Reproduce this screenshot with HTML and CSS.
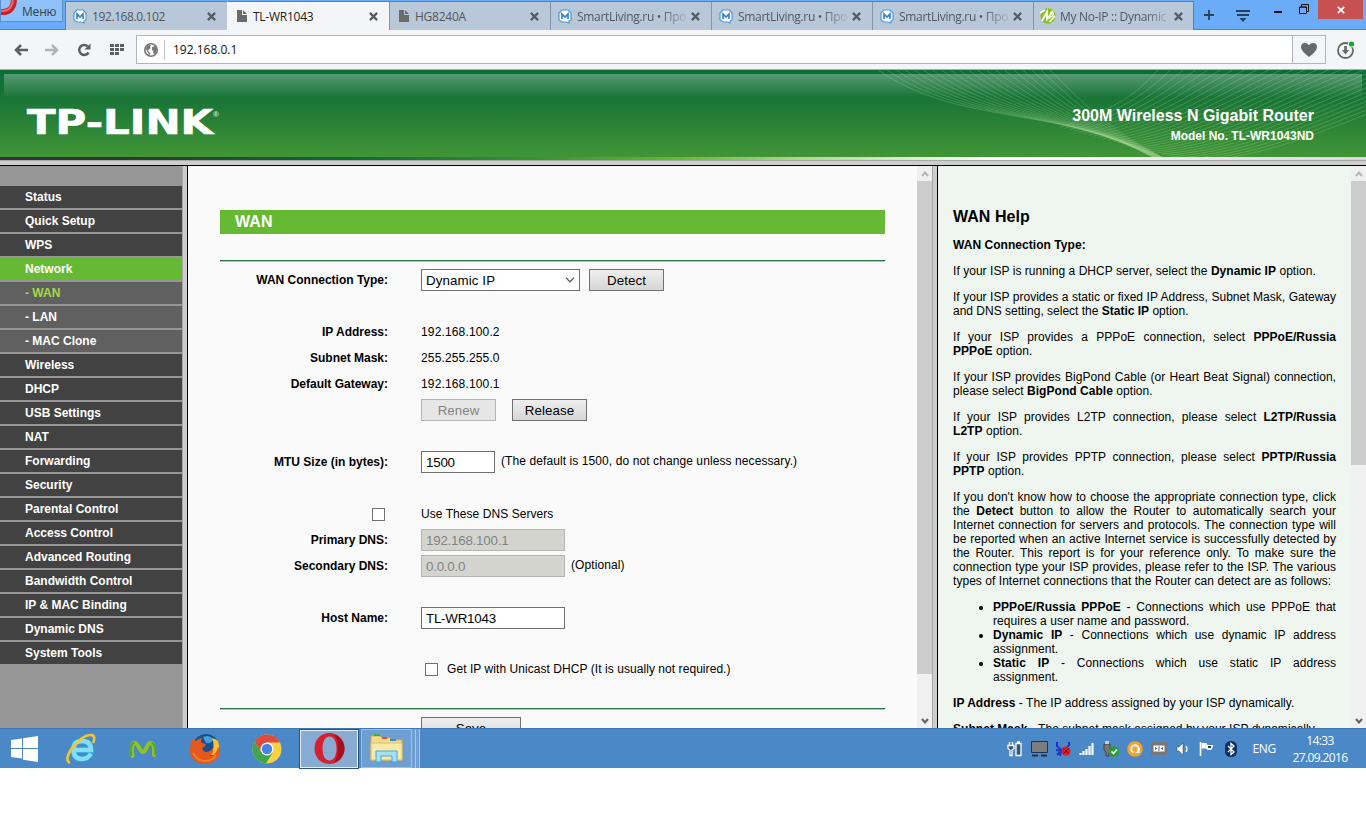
FILE: index.html
```
<!DOCTYPE html>
<html lang="en">
<head>
    <meta charset="UTF-8">
    <meta name="viewport" content="width=device-width, initial-scale=1.0">
    <title>TL-WR1043</title>
    <link rel="stylesheet" href="styles.css">
</head>
<body>
    <!-- shared icons -->
    <svg width="0" height="0" class="defs">
        <symbol id="fav-m" viewBox="0 0 14 15">
            <path d="M4 1h6l3 3v7l-2 1v2l-3-1H4l-3-2V4z" fill="#fff" stroke="#4f97d8" stroke-width="1.2"/>
            <path d="M4 10V5l3 3 3-3v5" fill="none" stroke="#3583cf" stroke-width="1.7"/>
        </symbol>
        <symbol id="fav-doc" viewBox="0 0 10 12">
            <path d="M0 0h5v5h5v7H0z" fill="#6b6b6b"/>
            <path d="M6 0l4 4H6z" fill="#6b6b6b"/>
        </symbol>
        <symbol id="x" viewBox="0 0 8 8">
            <path d="M.8.8l6.4 6.4M7.2.8L.8 7.2" stroke="#555c63" stroke-width="2"/>
        </symbol>
        <symbol id="chev" viewBox="0 0 8 6">
            <path d="M1 1l3 3.4L7 1" fill="none" stroke="currentColor" stroke-width="2"/>
        </symbol>
    </svg>

    <div class="tabstrip">
        <div class="menu-btn">
            <svg class="o-logo" width="18" height="17" viewBox="0 0 18 17"><path d="M0 12Q12 13 13 0" fill="none" stroke="#c8202c" stroke-width="6"/><path d="M0 11Q11 11.500 12 0" fill="none" stroke="#f26a70" stroke-width="2"/></svg>
            <span>Меню</span>
        </div>
        <div class="tab first"><svg class="fav" width="14" height="15"><use href="#fav-m"/></svg><span class="tt">192.168.0.102</span><svg class="cl" width="9" height="9"><use href="#x"/></svg></div>
        <div class="tab active"><svg class="fav doc" width="10" height="12"><use href="#fav-doc"/></svg><span class="tt">TL-WR1043</span><svg class="cl" width="9" height="9"><use href="#x"/></svg></div>
        <div class="tab"><svg class="fav doc" width="10" height="12"><use href="#fav-doc"/></svg><span class="tt">HG8240A</span><svg class="cl" width="9" height="9"><use href="#x"/></svg></div>
        <div class="tab"><svg class="fav" width="14" height="15"><use href="#fav-m"/></svg><span class="tt fade">SmartLiving.ru • Про</span><svg class="cl" width="9" height="9"><use href="#x"/></svg></div>
        <div class="tab"><svg class="fav" width="14" height="15"><use href="#fav-m"/></svg><span class="tt fade">SmartLiving.ru • Про</span><svg class="cl" width="9" height="9"><use href="#x"/></svg></div>
        <div class="tab"><svg class="fav" width="14" height="15"><use href="#fav-m"/></svg><span class="tt fade">SmartLiving.ru • Про</span><svg class="cl" width="9" height="9"><use href="#x"/></svg></div>
        <div class="tab last"><svg class="fav noip" width="16" height="16" viewBox="0 0 16 16"><circle cx="8" cy="8" r="7.700" fill="#8cc220"/><path d="M0 5l5-3M2 13L7 4v7l6-8M9.500 14L15 8" stroke="#fff" stroke-width="1.800" fill="none"/><path d="M10 4.500h2.500q2 2-1 4l-3 2" stroke="#fff" stroke-width="1.500" fill="none"/></svg><span class="tt fade">My No-IP :: Dynamic</span><svg class="cl" width="9" height="9"><use href="#x"/></svg></div>
        <svg class="plus" width="10" height="10" viewBox="0 0 10 10"><path d="M5 0v10M0 5h10" stroke="#27405c" stroke-width="1.800"/></svg>
        <svg class="tabmenu" width="14" height="12" viewBox="0 0 14 12"><path d="M0 1h14M1 5h12" stroke="#27405c" stroke-width="1.800"/><path d="M3.500 8h7L7 12z" fill="#27405c"/></svg>
        <div class="win">
            <svg class="min" width="8" height="2"><rect width="8" height="2" fill="#111"/></svg>
            <svg class="max" width="10" height="10" viewBox="0 0 10 10"><path d="M.5 3h7v6.500h-7zM2.500 2.500V.5h7v7H8" fill="none" stroke="#111"/><path d="M.5 3h7" stroke="#111"/></svg>
            <div class="close"><svg width="8" height="8" viewBox="0 0 8 8"><path d="M.8.8l6.400 6.400M7.200.8L.8 7.200" stroke="#fff" stroke-width="1.700"/></svg></div>
        </div>
    </div>

    <div class="toolbar">
        <svg class="t-back" width="14" height="12" viewBox="0 0 14 12"><path d="M14 6H3M7 1L2 6l5 5" fill="none" stroke="#5e5e5e" stroke-width="2.500"/></svg>
        <svg class="t-fwd" width="14" height="12" viewBox="0 0 14 12"><path d="M0 6h11M7 1l5 5-5 5" fill="none" stroke="#b3b3b3" stroke-width="2.500"/></svg>
        <svg class="t-rel" width="14" height="14" viewBox="0 0 14 14"><path d="M11.500 9.500A5 5 0 1 1 10.800 3.400" fill="none" stroke="#5e5e5e" stroke-width="2.500"/><path d="M13.500.5v6h-6z" fill="#5e5e5e"/></svg>
        <svg class="t-grid" width="14" height="11" viewBox="0 0 14 11"><path d="M0 1.500h14M0 5.500h14M0 9.500h9" stroke="#5e5e5e" stroke-width="3" stroke-dasharray="4 1"/></svg>
        <div class="address">
            <svg class="globe" width="14" height="14" viewBox="0 0 14 14"><circle cx="7" cy="7" r="6.200" fill="#fff" stroke="#777" stroke-width="1.600"/><path d="M3 2.500l4-.5-1 2 1 1-2 1-1 2 2 2v3L4 10 2 6zM8 4l3-1 2 4-2 4-2-1 .5-2L8 7z" fill="#777"/></svg>
            <span class="url">192.168.0.1</span>
            <div class="heart"><svg width="16" height="14" viewBox="0 0 16 14"><path d="M8 14Q0 8 0 4.300 0 0 4 0 6.500 0 8 2.300 9.500 0 12 0q4 0 4 4.300Q16 8 8 14z" fill="#686868"/></svg></div>
        </div>
        <svg class="t-dl" width="18" height="18" viewBox="0 0 18 18"><circle cx="8.500" cy="9.500" r="7.500" fill="none" stroke="#666" stroke-width="1.800"/><path d="M8.500 5v5" stroke="#666" stroke-width="2.600"/><path d="M5 9h7l-3.500 4.500z" fill="#666"/><circle cx="14.500" cy="3" r="3.500" fill="#f4f5f7"/><circle cx="14.500" cy="3" r="2.600" fill="#12a825"/></svg>
    </div>

    <header>
        <svg id="waves" width="496" height="87" viewBox="0 0 496 87"></svg>
        <div class="gloss"></div>
        <svg class="brand" width="200" height="34" viewBox="0 0 200 34">
            <text x="1" y="29" textLength="186" lengthAdjust="spacingAndGlyphs" class="brand-name">TP-LINK</text>
            <text x="187" y="12" class="brand-r">®</text>
        </svg>
        <div class="model">
            <div class="model-name">300M Wireless N Gigabit Router</div>
            <div class="model-no">Model No. TL-WR1043ND</div>
        </div>
    </header>
    <div class="stripe"></div>

    <div class="frames">
        <nav class="sidebar">
            <ul>
                <li><a>Status</a></li>
                <li><a>Quick Setup</a></li>
                <li><a>WPS</a></li>
                <li class="open"><a>Network</a></li>
                <li class="sub cur"><a>- WAN</a></li>
                <li class="sub"><a>- LAN</a></li>
                <li class="sub"><a>- MAC Clone</a></li>
                <li><a>Wireless</a></li>
                <li><a>DHCP</a></li>
                <li><a>USB Settings</a></li>
                <li><a>NAT</a></li>
                <li><a>Forwarding</a></li>
                <li><a>Security</a></li>
                <li><a>Parental Control</a></li>
                <li><a>Access Control</a></li>
                <li><a>Advanced Routing</a></li>
                <li><a>Bandwidth Control</a></li>
                <li><a>IP &amp; MAC Binding</a></li>
                <li><a>Dynamic DNS</a></li>
                <li><a>System Tools</a></li>
            </ul>
        </nav>
        <div class="splitter"></div>

        <main>
            <h1>WAN</h1>
            <div class="rule"></div>
            <div class="form">
                <div class="row">
                    <label>WAN Connection Type:</label>
                    <div class="select">Dynamic IP<svg width="10" height="6" viewBox="0 0 10 6"><path d="M1 .8l4 4 4-4" fill="none" stroke="#666" stroke-width="1.400"/></svg></div>
                    <button class="detect">Detect</button>
                </div>
                <div class="row gap"><label>IP Address:</label><span class="ip">192.168.100.2</span></div>
                <div class="row"><label>Subnet Mask:</label><span class="ip">255.255.255.0</span></div>
                <div class="row"><label>Default Gateway:</label><span class="ip">192.168.100.1</span></div>
                <div class="row"><label></label><button disabled>Renew</button><button class="release">Release</button></div>
                <div class="row gap"><label>MTU Size (in bytes):</label><input type="text" class="short" value="1500"><span class="note">(The default is 1500, do not change unless necessary.)</span></div>
                <div class="row gap"><label><i class="check"></i></label><span>Use These DNS Servers</span></div>
                <div class="row"><label>Primary DNS:</label><input type="text" value="192.168.100.1" disabled></div>
                <div class="row"><label>Secondary DNS:</label><input type="text" value="0.0.0.0" disabled><span class="note">(Optional)</span></div>
                <div class="row gap"><label>Host Name:</label><input type="text" value="TL-WR1043"></div>
                <div class="row gap ucast"><label></label><i class="check"></i><span>Get IP with Unicast DHCP (It is usually not required.)</span></div>
            </div>
            <div class="rule bottom"></div>
            <button class="save">Save</button>
        </main>
        <div class="scroll main-scroll">
            <svg class="up" width="8" height="6"><use href="#chev"/></svg>
            <div class="thumb"></div>
            <svg class="down" width="8" height="6"><use href="#chev"/></svg>
        </div>
        <div class="splitter"></div>

        <aside>
            <h2>WAN Help</h2>
            <p><b>WAN Connection Type:</b></p>
            <p>If your ISP is running a DHCP server, select the <b>Dynamic IP</b> option.</p>
            <p class="tight">If your ISP provides a static or fixed IP Address, Subnet Mask, Gateway and DNS setting, select the <b>Static IP</b> option.</p>
            <p>If your ISP provides a PPPoE connection, select <b>PPPoE/Russia PPPoE</b> option.</p>
            <p>If your ISP provides BigPond Cable (or Heart Beat Signal) connection, please select <b>BigPond Cable</b> option.</p>
            <p>If your ISP provides L2TP connection, please select <b>L2TP/Russia L2TP</b> option.</p>
            <p>If your ISP provides PPTP connection, please select <b>PPTP/Russia PPTP</b> option.</p>
            <p>If you don't know how to choose the appropriate connection type, click the <b>Detect</b> button to allow the Router to automatically search your Internet connection for servers and protocols. The connection type will be reported when an active Internet service is successfully detected by the Router. This report is for your reference only. To make sure the connection type your ISP provides, please refer to the ISP. The various types of Internet connections that the Router can detect are as follows:</p>
            <ul>
                <li><b>PPPoE/Russia PPPoE</b> - Connections which use PPPoE that requires a user name and password.</li>
                <li><b>Dynamic IP</b> - Connections which use dynamic IP address assignment.</li>
                <li><b>Static IP</b> - Connections which use static IP address assignment.</li>
            </ul>
            <p><b>IP Address</b> - The IP address assigned by your ISP dynamically.</p>
            <p><b>Subnet Mask</b> - The subnet mask assigned by your ISP dynamically.</p>
        </aside>
        <div class="scroll help-scroll">
            <svg class="up" width="8" height="6"><use href="#chev"/></svg>
            <div class="thumb"></div>
            <svg class="down" width="8" height="6"><use href="#chev"/></svg>
        </div>
    </div>

    <div class="taskbar">
        <div class="app start"><svg width="27" height="26" viewBox="0 0 27 26"><path d="M0 4l11-1.500V12H0zM12 2.300L27 0v12H12zM0 13h11v9.500L0 21zM12 13h15v13l-15-2.300z" fill="#fff"/></svg></div>
        <div class="app"><svg width="32" height="32" viewBox="0 0 32 32"><path d="M26 20.500Q23 26 17 26 8.500 26 8.500 16.500 8.500 8 17 8 26 8 26 17H10" fill="none" stroke="#2b9fd6" stroke-width="6.500"/><path d="M26 20.500Q23 26 17 26 8.500 26 8.500 16.500 8.500 8 17 8 26 8 26 17H10" fill="none" stroke="#86ddf8" stroke-width="4.500"/><path d="M5 30Q-1 27 7 15 18 1 27 2q4 2 1 8" fill="none" stroke="#f5c52c" stroke-width="2.600"/></svg></div>
        <div class="app"><svg width="28" height="22" viewBox="0 0 28 22"><path d="M3.500 18C2 10 3 5 6 5s5 9 8 9 4-9 7.500-9 4 5 3.500 12" fill="none" stroke="#8fc31f" stroke-width="4.200" stroke-linecap="round"/><path d="M2.300 18C1.200 11 2 6 5 4.500M26 17c1-6-.5-11-3.500-12.500" fill="none" stroke="#4ba23a" stroke-width="1.800"/></svg></div>
        <div class="app"><svg width="32" height="32" viewBox="0 0 32 32"><circle cx="17" cy="14" r="13" fill="#16508f"/><path d="M14 4q6-3 10 2-1 5-7 4z" fill="#3fa1d8"/><path d="M29 8Q32 16 27 22L21 22Q27 15 23 5 27 6 29 8z" fill="#f9c22e"/><path d="M4 6q2 1 3 2 3-3 6-3-2 3 0 5l4 1q-1 3-4 4 1 4 5 4 4-1 6-4 1 6-4 8 7 0 9-9 4 4 0 10-5 7-13 7Q1 30 1 17 1 10 4 6z" fill="#e5581c"/><path d="M4 20q4 8 12 8 8 0 11-6" fill="none" stroke="#f27d21" stroke-width="2"/></svg></div>
        <div class="app"><svg width="30" height="30" viewBox="0 0 30 30"><circle cx="15" cy="15" r="14.500" fill="#fbd144"/><path d="M2.500 7.500A14.500 14.500 0 0 1 28 8.500H15L8.500 17z" fill="#dd4b3e"/><path d="M2.500 7.500A14.500 14.500 0 0 0 14 29.500L20.500 19 9 18z" fill="#3fa650"/><circle cx="15" cy="15" r="6.500" fill="#fff"/><circle cx="15" cy="15" r="5.200" fill="#4484ee"/></svg></div>
        <div class="app run"><svg width="31" height="31" viewBox="0 0 31 31"><path d="M15.500 0C7 0 .5 6.500.5 15.500S7 31 15.500 31s15-6.500 15-15.500S24 0 15.500 0zm0 3.500c4.500 0 7 5 7 12s-2.500 12-7 12-7-5-7-12 2.500-12 7-12z" fill="#d5202f" fill-rule="evenodd"/><path d="M20 1.500c14 5 14 23 0 28q4-5 4-14t-4-14z" fill="#a70e20"/></svg></div>
        <div class="app exp"><svg width="34" height="31" viewBox="0 0 34 31"><path d="M1 3h9l2 2h8l2 2h10v20H1z" fill="#f3dd8b" stroke="#cfae4e"/><path d="M4 1h6v2H4z" fill="#35b24a"/><path d="M12 4h5v2h-5z" fill="#e0533d"/><path d="M20 6h6v2h-6z" fill="#2f8fdd"/><path d="M1 10h31v17H1z" fill="#f9e9a8" stroke="#dcbf68"/><path d="M6 29V18h21v11h-5v-6H11v6z" fill="#a7e0f2" stroke="#4aa6d2"/></svg></div>
        <div class="stack"><i></i><i></i></div>

        <div class="tray">
            <div><svg width="16" height="16" viewBox="0 0 16 16"><path d="M9 2.500h5v12H9zM10 1h3M2.500 1v3M5.500 1v3M1 4.500h6v3L5 9v5.500H3V9L1 7.500z" fill="#33567d" stroke="#fff" stroke-width="1.300"/></svg></div>
            <div><svg width="17" height="16" viewBox="0 0 17 16"><path d="M.5.5h16v11H.5z" fill="#7d7d7d" stroke="#24304f"/><path d="M1 14.500h6M10 14.500h6" stroke="#24304f" stroke-width="2"/></svg></div>
            <div><svg width="17" height="16" viewBox="0 0 17 16"><path d="M2 1v4l4 4 5-1 3-4V1M1 9l5 1-4 4M6 10l-1 5" fill="none" stroke="#1b36c7" stroke-width="2"/><circle cx="11" cy="10" r="4.500" fill="#dd1c26"/><path d="M8.500 7.500l5 5m0-5l-5 5" stroke="#601"/></svg></div>
            <div><svg width="16" height="14" viewBox="0 0 16 14"><path d="M1.500 11v2M4.500 9v4M7.500 7v6M10.500 4v9M13.500 1v12" stroke="#fff" stroke-width="2.200"/></svg></div>
            <div><svg width="17" height="16" viewBox="0 0 17 16"><path d="M1 3h6v7l-1 2v3H3v-4L1 9z" fill="#777" stroke="#444"/><path d="M2 0h4v3H2z" fill="#ccc"/><circle cx="11" cy="10.500" r="5.300" fill="#2c9a35"/><path d="M8.500 10.500l2 2 3.500-4" fill="none" stroke="#fff" stroke-width="1.700"/></svg></div>
            <div><svg width="16" height="16" viewBox="0 0 16 16"><circle cx="8" cy="8" r="7.800" fill="#f7a12b"/><circle cx="8" cy="8" r="3.800" fill="none" stroke="#fff" stroke-width="1.900"/><path d="M11.500 8v4" stroke="#fff" stroke-width="1.900"/><path d="M6 12l2-1.500L10 13H6z" fill="#f7a12b"/></svg></div>
            <div><svg width="16" height="14" viewBox="0 0 16 14"><rect width="16" height="13" rx="1" fill="#777"/><path d="M2.500 3.500h11v6h-11z" fill="#fff"/><path d="M4 5l2.500 1.500L4 8zM12 5L9.500 6.500 12 8zM7.500 4h1v5h-1z" fill="#666"/></svg></div>
            <div><svg width="14" height="14" viewBox="0 0 14 14"><path d="M1 5h2l4-4v12L3 9H1z" fill="#fff" stroke="#24405f" stroke-width=".5"/><path d="M10 4q2 3 0 6" fill="none" stroke="#fff" stroke-width="1.300"/></svg></div>
            <div><svg width="16" height="16" viewBox="0 0 16 16"><path d="M1.500 1v14" stroke="#fff" stroke-width="1.600"/><path d="M2.500 2h5l1 2h6l-2 5h-4L7 7.500H2.500z" fill="#fff"/><path d="M9 5h3v2H9z" fill="#24405f"/></svg></div>
            <div><svg width="12" height="16" viewBox="0 0 12 16"><rect width="12" height="16" rx="5.500" fill="#0d2f63"/><path d="M3 5l6 6-3 2.500v-11L9 5l-6 6" fill="none" stroke="#fff" stroke-width="1.300"/></svg></div>
        </div>
        <span class="lang">ENG</span>
        <div class="clock">14:33<br>27.09.2016</div>
    </div>

    <script>
        // two families of thin curves in the banner, blended between the outer ones
        const waves = document.getElementById('waves');
        function family(from, to, count) {
            for (let i = 0; i < count; i++) {
                const t = i / (count - 1);
                const p = from.map((v, k) => (v + (to[k] - v) * t).toFixed(1));
                const path = document.createElementNS('http://www.w3.org/2000/svg', 'path');
                path.setAttribute('d', `M${p[0]} ${p[1]}C${p[2]} ${p[3]} ${p[4]} ${p[5]} ${p[6]} ${p[7]}`);
                waves.appendChild(path);
            }
        }
        family([8, 0, 90, 57, 190, 35, 282, 87], [180, 0, 215, 35, 240, 62, 306, 94], 20);
        family([288, 0, 268, 22, 246, 40, 190, 57], [640, -10, 480, 45, 420, 86, 320, 92], 28);
    </script>
</body>
</html>
```
FILE: styles.css
```
* {
    box-sizing: border-box;
}

body {
    margin: 0;
    width: 1366px;
    height: 816px;
    overflow: hidden;
    background: #fff;
    font-family: "Liberation Sans", Arial, sans-serif;
    font-size: 12px;
    color: #000;
}

svg {
    display: block;
    flex: none;
}

.defs {
    position: absolute;
}

/* browser */
.tabstrip {
    display: flex;
    height: 30px;
    background: #6aacf8;
    border-bottom: 1px solid #5583b3;
    font-family: "Open Sans", "Noto Sans", sans-serif;
}

.menu-btn {
    display: flex;
    width: 63px;
    height: 22px;
    margin-right: 2px;
    border: 1px solid #5b8cc7;
    border-top: none;
    background: #8fc1fa;
    color: #33404f;
}

.menu-btn span {
    padding: 3px 0 0 3px;
    font-size: 12px;
    letter-spacing: -.2px;
}

.tab {
    display: flex;
    align-items: center;
    width: 161px;
    height: 29px;
    margin-top: 1px;
    padding: 0 11px 0 7px;
    background: #b9c8d8;
    border-top: 1px solid #4f81b8;
    border-left: 1px solid #8295aa;
    color: #50575f;
    font-size: 12px;
}

.tab.first {
    width: 162px;
    border-left-color: #4f81b8;
}

.tab.active {
    width: 162px;
    background: #f4f5f7;
    border-left-color: #f4f5f7;
    box-shadow: 0 1px #f4f5f7;
    color: #222;
}

.tab.last {
    width: 161px;
    border-right: 1px solid #4f81b8;
    padding: 0 10px 0 6px;
}

.fav.doc {
    margin-left: 2px;
}

.tt {
    flex: 1;
    margin: 1px 0 0 5px;
    white-space: nowrap;
    letter-spacing: -.4px;
}

.doc + .tt {
    margin-left: 6px;
    letter-spacing: -.25px;
}

.fade {
    letter-spacing: -.3px;
    -webkit-mask-image: linear-gradient(90deg, #000 74%, transparent 100%);
    mask-image: linear-gradient(90deg, #000 74%, transparent 100%);
}

.tab.last .fade {
    margin-left: 4px;
}

.plus {
    margin: 10px 0 0 10px;
}

.tabmenu {
    margin: 10px 0 0 22px;
}

.win {
    display: flex;
    margin-left: auto;
    margin-right: 3px;
}

.min {
    margin-top: 11px;
}

.max {
    margin: 4px 0 0 17px;
}

.close {
    display: flex;
    width: 45px;
    height: 19px;
    margin-left: 9px;
    align-items: center;
    justify-content: center;
    background: #c75050;
}

.toolbar {
    display: flex;
    align-items: center;
    height: 40px;
    padding: 0 11px 0 14px;
    background: #f4f5f7;
    border-bottom: 1px solid #a9adb0;
}

.t-fwd {
    margin-left: 17px;
}

.t-rel {
    margin-left: 18px;
}

.t-grid {
    margin-left: 19px;
}

.address {
    display: flex;
    align-items: center;
    width: 1190px;
    height: 29px;
    margin-left: 12px;
    padding-left: 7px;
    background: #fff;
    border: 1px solid #b1b5ba;
}

.url {
    flex: 1;
    margin-left: 6px;
    padding-left: 8px;
    border-left: 1px solid #c4c4c4;
    font: 12px/20px "Open Sans", "Noto Sans", sans-serif;
    color: #111;
}

.heart {
    display: flex;
    align-items: center;
    justify-content: center;
    width: 33px;
    height: 27px;
    background: #f4f5f7;
    border-left: 1px solid #b1b5ba;
}

.t-dl {
    margin-left: 11px;
}

/* router banner */
header {
    position: relative;
    display: flex;
    justify-content: space-between;
    height: 87px;
    background: linear-gradient(#0b6c35 0, #0f6f36 6px, #1a7536 30px, #419536);
    color: #fff;
}

.gloss {
    position: absolute;
    left: 4px;
    right: 4px;
    top: 4px;
    height: 24px;
    background: linear-gradient(rgba(255, 255, 255, .3), rgba(255, 255, 255, 0));
}

#waves {
    position: absolute;
    right: 0;
    top: 0;
}

#waves path {
    fill: none;
    stroke: #b6e2a8;
    stroke-opacity: .27;
    stroke-width: .9;
}

.brand {
    position: relative;
    margin: 35px 0 0 26px;
}

.brand-name {
    font: bold 33px "DejaVu Sans", sans-serif;
    fill: #fff;
    stroke: #fff;
    stroke-width: .6;
}

.brand-r {
    font: bold 8px "Liberation Sans", sans-serif;
    fill: #d9ead6;
}

.model {
    position: relative;
    margin: 36px 52px 0 0;
    text-align: right;
    font-weight: bold;
}

.model-name {
    font-size: 16px;
    line-height: 19px;
}

.model-no {
    margin-top: 4px;
    font-size: 12px;
    line-height: 14px;
}

.stripe {
    height: 9px;
    background: linear-gradient(transparent 3px, #a7a7a7 3px, #a7a7a7 4px, #cdcdcd 4px, #cdcdcd 8px, #000 8px),
        linear-gradient(90deg, #333 0, #2a3a2e 120px, #0c6a35 350px, #3f9434 550px, #66b933 680px, #a9d98a 800px, #fff 1000px, #d8d8d8 1366px);
}

/* frames */
.frames {
    display: flex;
    height: 562px;
    overflow: hidden;
}

.sidebar {
    width: 182px;
    padding-top: 20px;
    background: #969696;
}

.sidebar ul {
    margin: 0;
    padding: 0;
    list-style: none;
}

.sidebar li {
    height: 22px;
    margin-bottom: 2px;
    padding-left: 25px;
    background: #424242;
    color: #fff;
    font-weight: bold;
    line-height: 22px;
}

.sidebar .open {
    background: #66b933;
}

.sidebar .sub {
    background: #606060;
}

.sidebar .cur {
    color: #a5d945;
}

.splitter {
    width: 6px;
    background: #cdcdcd;
    border-left: 1px solid #a8a8a8;
    border-right: 1px solid #000;
}

main {
    width: 729px;
    height: 562px;
    padding: 44px 32px 0;
    overflow: hidden;
    background: #fafafa;
    letter-spacing: .06px;
}

h1 {
    height: 24px;
    margin: 0 0 26px;
    padding-left: 15px;
    background: #66b933;
    color: #fff;
    font-size: 16px;
    line-height: 23px;
}

.rule {
    height: 2px;
    background: #2d6f47;
    border-bottom: 1px solid #a8cdb5;
}

.form {
    padding-top: 5px;
}

.row {
    display: flex;
    align-items: center;
    height: 26px;
}

.row.gap {
    margin-top: 26px;
}

.row label {
    width: 168px;
    margin-right: 33px;
    text-align: right;
    font-weight: bold;
    letter-spacing: 0;
}

.ip {
    letter-spacing: .15px;
}

.select {
    display: flex;
    align-items: center;
    justify-content: space-between;
    width: 159px;
    height: 22px;
    padding: 0 4px;
    background: #fff;
    border: 1px solid #707070;
    font-size: 13.333px;
    letter-spacing: .1px;
}

button {
    width: 75px;
    height: 22px;
    padding: 0;
    background: linear-gradient(#eee, #d6d6d6);
    border: 1px solid #707070;
    border-radius: 0;
    color: #000;
    font: 13.333px "Liberation Sans", Arial, sans-serif;
    letter-spacing: .05px;
}

button:disabled {
    background: #e6e6e6;
    border-color: #b5b5b5;
    color: #838383;
}

.detect {
    margin-left: 9px;
}

.release {
    margin-left: 16px;
}

input {
    width: 144px;
    height: 22px;
    padding: 0 4px;
    background: #fff;
    border: 1px solid #707070;
    color: #000;
    font: 13.333px "Liberation Sans", Arial, sans-serif;
    letter-spacing: -.22px;
}

input:disabled {
    background: #d4d4cf;
    border-color: #b5b5b0;
    color: #838383;
}

input.short {
    width: 74px;
}

.note {
    margin: -3px 0 0 6px;
    letter-spacing: .09px;
}

.check {
    display: inline-block;
    width: 13px;
    height: 13px;
    margin-right: 3px;
    background: #fff;
    border: 1px solid #707070;
    vertical-align: middle;
}

.ucast {
    padding-bottom: 2px;
}

.ucast .check {
    margin: 0 9px 0 4px;
}

.bottom {
    margin-top: 25px;
}

.save {
    width: 100px;
    margin: 7px 0 0 201px;
}

.scroll {
    display: flex;
    flex-direction: column;
    width: 15px;
    background: #f0f0f0;
    align-items: center;
}

.up {
    margin: 5px 0 4px;
    color: #b5b5b5;
    transform: rotate(180deg);
}

.thumb {
    width: 15px;
    background: #cdcdcd;
}

.main-scroll .thumb {
    height: 493px;
}

.help-scroll .thumb {
    height: 284px;
}

.down {
    margin: auto 0 4px;
    color: #606060;
}

aside {
    width: 413px;
    height: 562px;
    padding: 41px 15px 0;
    overflow: hidden;
    background: #eef6ef;
    line-height: 14px;
    text-align: justify;
    letter-spacing: .045px;
}

aside h2 {
    margin: 0 0 12px;
    font-size: 16px;
    line-height: 19px;
}

aside p {
    margin: 0 0 12px;
}

aside .tight {
    letter-spacing: 0;
}

aside ul {
    margin: 0 0 12px;
    padding-left: 40px;
}

/* windows taskbar */
.taskbar {
    display: flex;
    align-items: center;
    height: 40px;
    background: #4a88c7;
    border-top: 1px solid #3e76b1;
    color: #fff;
    font: 12px "Open Sans", "Noto Sans", sans-serif;
}

.app {
    display: flex;
    align-items: center;
    justify-content: center;
    width: 62px;
    height: 39px;
}

.app.start {
    width: 50px;
    padding-right: 2px;
}

.app.run {
    width: 58px;
    height: 38px;
    margin-left: 2px;
    border: 1px solid #e6f0fa;
    outline: 1px solid #2c527a;
    background: #88abd3;
}

.app.exp {
    width: 51px;
    margin-left: 3px;
    background: #6d9fd2;
    border: 1px solid #9dc0e4;
}

.stack {
    display: flex;
    height: 39px;
}

.stack i {
    width: 4px;
    background: #6d9fd2;
    border-right: 1px solid #a9c8e6;
}

.tray {
    display: flex;
    margin-left: auto;
}

.tray div {
    display: flex;
    justify-content: center;
    align-items: center;
    width: 24px;
}

.lang {
    margin-left: 9px;
    font-size: 12px;
    letter-spacing: -.3px;
}

.clock {
    width: 56px;
    margin: 0 18px 0 16px;
    text-align: center;
    line-height: 17px;
    letter-spacing: -.6px;
    white-space: nowrap;
}
```
